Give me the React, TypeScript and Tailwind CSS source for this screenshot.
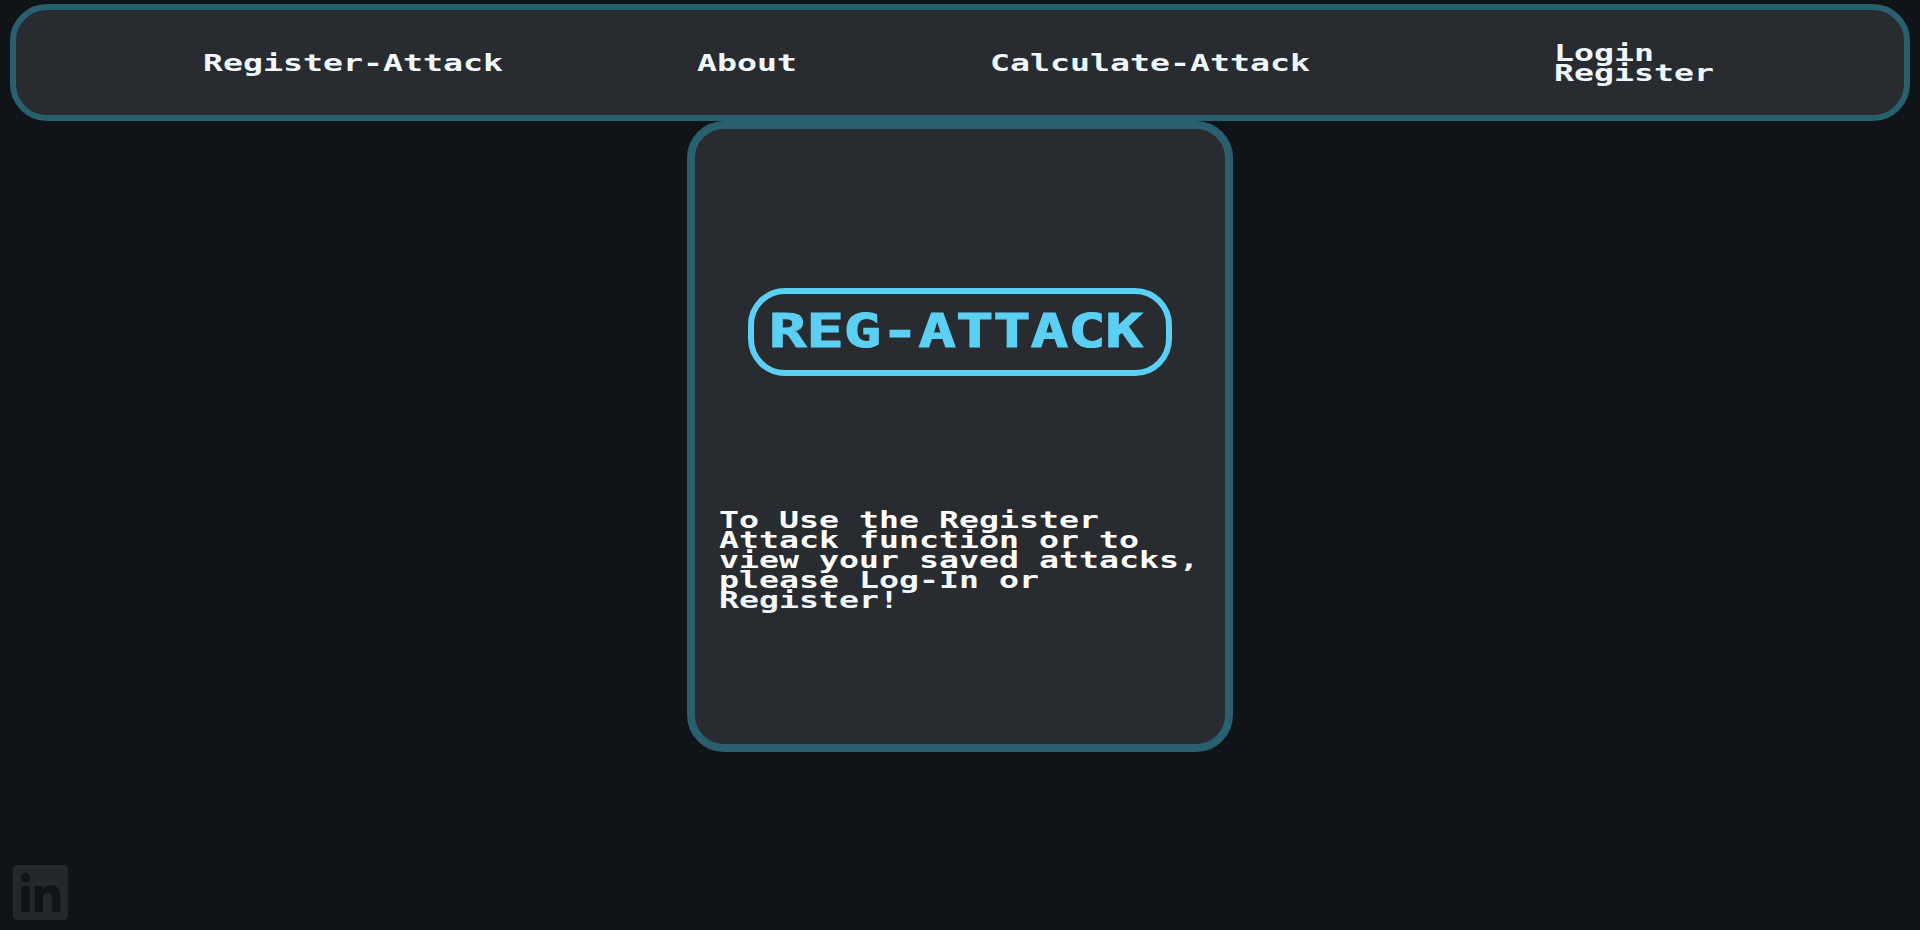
import { FaLinkedin } from "react-icons/fa";
import type { ReactNode } from "react";

function NavLabel({ children, width }: { children: ReactNode; width: string }) {
  return (
    <a className={`block h-5 ${width} whitespace-nowrap`}>
      <span className="inline-block origin-left scale-x-[1.444]">{children}</span>
    </a>
  );
}

export default function App() {
  return (
    <div className="flex h-[930px] flex-col overflow-hidden bg-[#101318] px-[10px] pt-1 font-['DejaVu_Sans_Mono',monospace] text-[23px] leading-5 font-bold text-[#f0f8ff]">
      <nav className="flex h-[117px] shrink-0 items-center rounded-[37px] border-6 border-[#28606f] bg-[#282b30] pl-[187px]">
        <NavLabel width="w-[300px]">Register-Attack</NavLabel>
        <div className="ml-[194px]">
          <NavLabel width="w-[100px]">About</NavLabel>
        </div>
        <div className="ml-[193px]">
          <NavLabel width="w-[320px]">Calculate-Attack</NavLabel>
        </div>
        <div className="ml-[244px] flex flex-col">
          <NavLabel width="w-[160px]">Login</NavLabel>
          <NavLabel width="w-[160px]">Register</NavLabel>
        </div>
      </nav>

      <main className="flex h-[631px] w-[546px] shrink-0 flex-col self-center rounded-[37px] border-8 border-[#28606f] bg-[#282b30] pt-[159px]">
        <h1 className="flex h-[88px] w-[424px] items-center self-center rounded-[37px] border-6 border-[#5bd0f2] pb-px pl-[15px] text-[46.6px] leading-none text-[#5bd0f2]">
          <span className="origin-left scale-x-[1.333] whitespace-nowrap [-webkit-text-stroke:1.2px_#5bd0f2]">
            REG-ATTACK
          </span>
        </h1>
        <p className="mt-[134px] ml-6 w-[345px] origin-left scale-x-[1.444] text-white">
          To Use the Register
          <br />
          Attack function or to
          <br />
          view your saved attacks,
          <br />
          please <a className="text-[#f0f8ff]">Log-In</a> or
          <br />
          <a className="text-[#f0f8ff]">Register!</a>
        </p>
      </main>

      <footer className="mt-[109px] -ml-px">
        <FaLinkedin className="size-[63px] text-[#24282b]" />
      </footer>
    </div>
  );
}
